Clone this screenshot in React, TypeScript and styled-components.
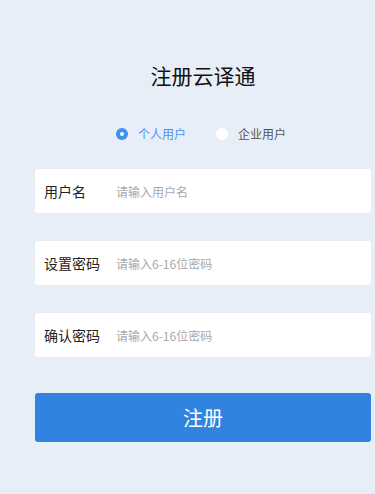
import React from "react";
import styled, { createGlobalStyle } from "styled-components";

const Global = createGlobalStyle`
  html, body { margin: 0; padding: 0; background: #e8eef7; }
  body { font-family: "Noto Sans CJK SC", "Noto Sans", sans-serif; }
  * { box-sizing: border-box; }
`;

const Page = styled.div`
  width: 375px;
  height: 494px;
  background: #e8eef7;
  padding: 59px 4px 0 35px;
  display: flex;
  flex-direction: column;
`;

const Title = styled.h1`
  margin: 0;
  text-align: center;
  font-size: 21px;
  font-weight: 400;
  color: #111;
  line-height: 32px;
`;

const RadioRow = styled.div`
  display: flex;
  justify-content: center;
  gap: 30px;
  margin-top: 35px;
  padding-right: 4px;
`;

const RadioItem = styled.label<{ $active?: boolean }>`
  display: flex;
  align-items: center;
  gap: 10px;
  font-size: 12px;
  line-height: 16px;
  color: ${(p) => (p.$active ? "#4a94f0" : "#555")};
`;

const Dot = styled.span<{ $active?: boolean }>`
  width: 12px;
  height: 12px;
  border-radius: 50%;
  background: ${(p) => (p.$active ? "#3d8ff0" : "#fff")};
  display: flex;
  align-items: center;
  justify-content: center;
  &::after {
    content: "";
    width: 4px;
    height: 4px;
    border-radius: 50%;
    background: #fff;
    display: ${(p) => (p.$active ? "block" : "none")};
  }
`;

const Form = styled.div`
  margin-top: 27px;
  display: flex;
  flex-direction: column;
  gap: 28px;
`;

const Field = styled.div`
  height: 44px;
  background: #fff;
  border-radius: 3px;
  display: flex;
  align-items: center;
  padding-left: 9px;
`;

const Label = styled.span`
  width: 72px;
  flex: none;
  font-size: 14px;
  color: #222;
`;

const Input = styled.input`
  border: none;
  outline: none;
  background: transparent;
  font-family: inherit;
  font-size: 12px;
  color: #333;
  flex: 1;
  padding: 0;
  &::placeholder { color: #a6a9ae; }
`;

const Submit = styled.button`
  margin-top: 36px;
  height: 49px;
  border: none;
  border-radius: 3px;
  background: #3183e0;
  color: #fff;
  font-family: inherit;
  font-size: 20px;
  cursor: pointer;
`;

export default function App() {
  return (
    <>
      <Global />
      <Page>
        <Title>注册云译通</Title>
        <RadioRow>
          <RadioItem $active>
            <Dot $active />
            个人用户
          </RadioItem>
          <RadioItem>
            <Dot />
            企业用户
          </RadioItem>
        </RadioRow>
        <Form>
          <Field>
            <Label>用户名</Label>
            <Input placeholder="请输入用户名" />
          </Field>
          <Field>
            <Label>设置密码</Label>
            <Input type="password" placeholder="请输入6-16位密码" />
          </Field>
          <Field>
            <Label>确认密码</Label>
            <Input type="password" placeholder="请输入6-16位密码" />
          </Field>
        </Form>
        <Submit>注册</Submit>
      </Page>
    </>
  );
}
